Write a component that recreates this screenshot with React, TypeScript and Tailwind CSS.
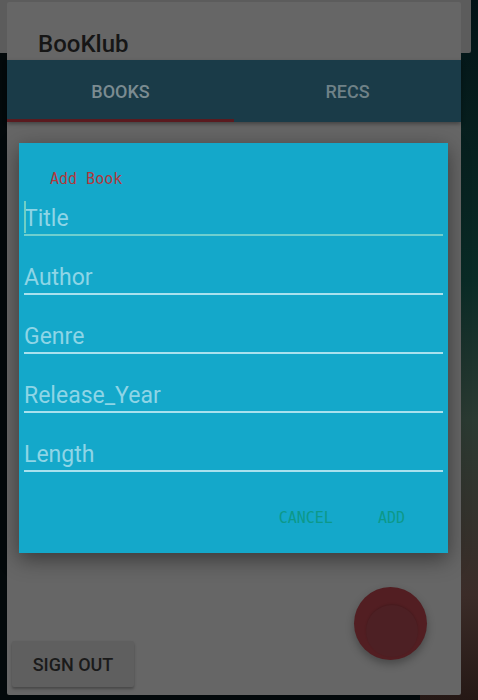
import React from 'react';

const fields = ['Title', 'Author', 'Genre', 'Release_Year', 'Length'];

const mono = { fontFamily: '"DejaVu Sans Mono", monospace' };

export default function App() {
  return (
    <div
      className="relative w-[478px] h-[700px] overflow-hidden bg-[linear-gradient(180deg,#031316_0%,#0a2b26_40%,#2b3a32_60%,#3b2c28_85%,#251815_100%)]"
      style={{ fontFamily: 'Roboto, "Noto Sans", sans-serif' }}
    >
      {/* darker wallpaper on the left */}
      <div className="absolute inset-y-0 left-0 w-[420px] bg-[#03090b]" />

      {/* window behind */}
      <div className="absolute left-0 top-0 w-[471px] h-[53px] rounded-br-[2px] bg-[#5c5c5c]" />

      {/* app window */}
      <div className="absolute left-[7px] top-[2px] w-[454px] h-[693px] flex flex-col bg-[#666666] rounded-[2px]">
        <div className="h-[58px] flex items-end pl-[31px] pb-[1px]">
          <span className="text-[24px] leading-[30px] font-medium text-[#161616]">BooKlub</span>
        </div>

        <div className="h-[62px] flex bg-[#1a3b48] shadow-[0_2px_4px_rgba(0,0,0,0.35)] z-10">
          <div className="relative flex-1 flex items-center justify-center">
            <span className="text-[18px] font-medium text-[#7b8b91]">BOOKS</span>
            <div className="absolute bottom-0 left-0 right-0 h-[3px] bg-[#5a1a1f]" />
          </div>
          <div className="flex-1 flex items-center justify-center">
            <span className="text-[18px] font-medium text-[#6f8187]">RECS</span>
          </div>
        </div>

        <div className="relative flex-1 flex flex-col justify-end pl-[5px] pb-[8px]">
          <button className="w-[122px] h-[46px] rounded-[2px] bg-[#5f5f5f] shadow-[0_2px_3px_rgba(0,0,0,0.3)] text-[18px] font-medium text-[#1a1a1a]">
            SIGN OUT
          </button>

          {/* FAB */}
          <div className="absolute left-[347px] top-[465px] w-[73px] h-[73px] rounded-full bg-[#521e22] shadow-[0_4px_8px_rgba(0,0,0,0.3)]">
            <div className="absolute left-[12px] top-[18px] w-[52px] h-[52px] rounded-full bg-[#4d2024] shadow-[0_-1px_2px_rgba(0,0,0,0.15)]" />
          </div>

          {/* dialog */}
          <div className="absolute left-[12px] top-[21px] w-[429px] h-[410px] bg-[#14a8ca] shadow-[0_6px_20px_rgba(0,0,0,0.45)] flex flex-col">
            <div className="pt-[24px] pl-[31px] h-[44px]">
              <span className="text-[15px] leading-[20px] text-[#b0383c]" style={mono}>
                Add Book
              </span>
            </div>
            <div className="flex flex-col gap-[10px] px-[5px]">
              {fields.map((f, i) => (
                <div
                  key={f}
                  className={`relative h-[49px] flex items-end border-b-2 ${
                    i === 0 ? 'border-[#6fcfcf]' : 'border-[#a9e1ee]'
                  }`}
                >
                  {i === 0 && (
                    <div className="absolute left-0 top-[14px] w-[2px] h-[32px] bg-[#6fcfc6]" />
                  )}
                  <span className="text-[23px] leading-[30px] text-[#8ed5e6]">{f}</span>
                </div>
              ))}
            </div>
            <div className="flex justify-end items-center gap-[45px] pr-[43px] mt-[36px]">
              <span className="text-[15px] leading-[20px] text-[#0d9889]" style={mono}>
                CANCEL
              </span>
              <span className="text-[15px] leading-[20px] text-[#0d9889]" style={mono}>
                ADD
              </span>
            </div>
          </div>
        </div>
      </div>
    </div>
  );
}
